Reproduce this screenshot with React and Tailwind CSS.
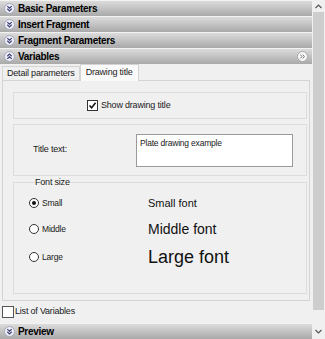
import React from "react"

function ExpandIcon({ up }) {
  return (
    <svg width="11" height="11" viewBox="0 0 11 11" className="shrink-0">
      <circle cx="5.5" cy="5.5" r="5" fill="#eceef8" stroke="#a6a6ba" />
      <path
        d={up ? "M3.3 5.2 L5.5 3.1 L7.7 5.2 M3.3 7.9 L5.5 5.8 L7.7 7.9" : "M3.3 3.1 L5.5 5.2 L7.7 3.1 M3.3 5.8 L5.5 7.9 L7.7 5.8"}
        fill="none"
        stroke="#3f4170"
        strokeWidth="1.2"
      />
    </svg>
  )
}

function MoreIcon() {
  return (
    <svg width="11" height="11" viewBox="0 0 11 11" className="ml-auto shrink-0">
      <circle cx="5.5" cy="5.5" r="5" fill="#f7f7f7" stroke="#a8a8a8" />
      <path d="M3.4 3.6 L5 5.5 L3.4 7.4 M5.8 3.6 L7.4 5.5 L5.8 7.4" fill="none" stroke="#777" strokeWidth="1" />
    </svg>
  )
}

function Header({ title, up, more }) {
  return (
    <div className="h-[16px] flex items-center gap-[3px] pl-[4px] pr-[4px] border-t border-[#f2f2f2] bg-gradient-to-b from-[#dcdcdc] to-[#a9a9a9]">
      <ExpandIcon up={up} />
      <span className="font-bold text-[10px] tracking-[-0.3px] text-black leading-none">{title}</span>
      {more && <MoreIcon />}
    </div>
  )
}

function Radio({ checked, label }) {
  return (
    <div className="flex items-center gap-[3px]">
      <span className="w-[10px] h-[10px] rounded-full border border-[#333] bg-white flex items-center justify-center">
        {checked && <span className="w-[4px] h-[4px] rounded-full bg-[#111]" />}
      </span>
      <span className="text-[8.5px] tracking-[-0.2px]">{label}</span>
    </div>
  )
}

export default function App() {
  const sizes = [
    { label: "Small", text: "Small font", cls: "text-[11px] h-[26px]", checked: true },
    { label: "Middle", text: "Middle font", cls: "text-[14px] h-[26px]" },
    { label: "Large", text: "Large font", cls: "text-[18px] h-[30px]" },
  ]

  return (
    <div className="w-[325px] h-[339px] flex bg-[#f0f0f0] overflow-hidden font-['Liberation_Sans',Arial,sans-serif] text-[#1a1a1a]">
      {/* main column */}
      <div className="w-[312px] flex flex-col">
        <Header title="Basic Parameters" />
        <Header title="Insert Fragment" />
        <Header title="Fragment Parameters" />
        <Header title="Variables" up more />

        {/* tabs */}
        <div className="h-[16px] flex items-end pl-[2px] text-[9px] tracking-[-0.2px]">
          <div className="h-[14px] px-[4px] flex items-center border border-b-0 border-[#d4d4d4] bg-[#f0f0f0]">
            Detail parameters
          </div>
          <div className="h-[17px] px-[5px] flex items-center border border-b-0 border-[#d4d4d4] bg-[#fafafa] -mb-px relative">
            Drawing title
          </div>
        </div>

        {/* tab panel */}
        <div className="mx-[2px] h-[221px] border border-[#d4d4d4] pt-[11px] pl-[10px] pr-[2px] flex flex-col gap-[5px] text-[9px] tracking-[-0.2px]">
          <div className="h-[27px] border border-[#dcdcdc] flex items-center pl-[73px]">
            <span className="w-[11px] h-[11px] border border-[#333] bg-white flex items-center justify-center">
              <svg width="9" height="9" viewBox="0 0 9 9">
                <path d="M1.5 4.5 L3.6 6.8 L7.6 1.8" fill="none" stroke="#111" strokeWidth="1.5" />
              </svg>
            </span>
            <span className="ml-[3px]">Show drawing title</span>
          </div>

          <div className="h-[52px] border border-[#dcdcdc] flex items-center pl-[19px]">
            <span className="w-[103px]">Title text:</span>
            <div className="w-[157px] h-[33px] border border-[#9a9a9a] bg-white px-[3px] pt-[2px] text-[8.5px]">
              Plate drawing example
            </div>
          </div>

          <fieldset className="-mt-[4px] h-[117px] border border-[#dcdcdc] pl-[15px]">
            <legend className="ml-[6px] text-[9px] leading-[11px]">Font size</legend>
            <div className="pt-[2px]">
              {sizes.map((s) => (
                <div key={s.label} className={`flex items-center ${s.cls}`}>
                  <div className="w-[119px]">
                    <Radio checked={s.checked} label={s.label} />
                  </div>
                  <span className="tracking-normal text-[#111]">{s.text}</span>
                </div>
              ))}
            </div>
          </fieldset>
        </div>

        {/* list of variables */}
        <div className="h-[22px] flex items-center pl-[2px] text-[9px] tracking-[-0.2px]">
          <span className="w-[12px] h-[12px] border border-[#555] bg-white" />
          <span className="ml-[1px]">List of Variables</span>
        </div>

        <Header title="Preview" />
      </div>

      {/* scrollbar */}
      <div className="w-[13px] flex flex-col bg-[#f0f0f0]">
        <div className="h-[12px] flex items-center justify-center">
          <svg width="7" height="5" viewBox="0 0 7 5">
            <path d="M0.5 4 L3.5 1 L6.5 4" fill="none" stroke="#555" strokeWidth="1.2" />
          </svg>
        </div>
        <div className="h-[298px] mx-[1px] bg-[#cdcdcd]" />
        <div className="flex-1 flex items-end justify-center pb-[5px]">
          <svg width="7" height="5" viewBox="0 0 7 5">
            <path d="M0.5 1 L3.5 4 L6.5 1" fill="none" stroke="#555" strokeWidth="1.2" />
          </svg>
        </div>
      </div>
    </div>
  )
}
